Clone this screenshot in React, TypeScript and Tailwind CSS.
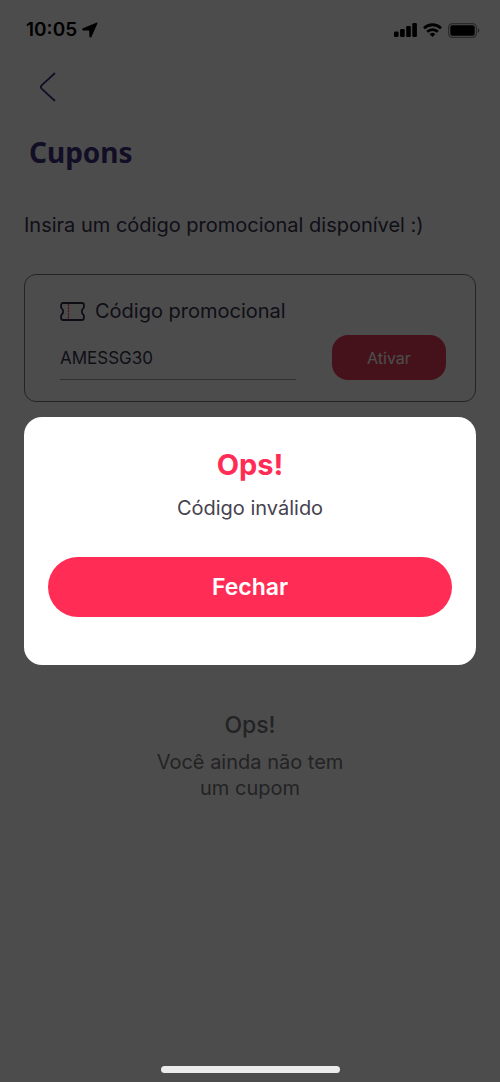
import { useState } from "react";

function StatusBar() {
  return (
    <header className="flex h-[60px] items-center justify-between pr-5 pl-[26px] text-black">
      <div className="flex items-center gap-[5px]">
        <span className="text-[19px] leading-6 font-semibold">10:05</span>
        <svg width="16" height="16" viewBox="0 0 16 16" fill="currentColor" aria-hidden="true">
          <path d="M14.300.7 1 6.300C-.1 6.800.1 8.400 1.300 8.400l5.900.2.200 5.900c.1 1.300 1.600 1.500 2.100.3L15.300 1.700c.3-.8-.2-1.300-1-1z" />
        </svg>
      </div>
      <div className="flex items-center gap-[6px]">
        <svg width="23" height="14" viewBox="0 0 23 14" fill="currentColor" aria-hidden="true">
          <rect x="0" y="8.500" width="4.600" height="5.500" rx="1.200" />
          <rect x="6.100" y="6" width="4.600" height="8" rx="1.200" />
          <rect x="12.200" y="3" width="4.600" height="11" rx="1.200" />
          <rect x="18.300" y="0" width="4.600" height="14" rx="1.200" />
        </svg>
        <svg width="19" height="14" viewBox="0 0 19 14" fill="none" stroke="currentColor" strokeWidth="2.800" aria-hidden="true">
          <path d="M1 5.200a12.200 12.200 0 0 1 17 0" />
          <path d="M4.200 8.800a7.600 7.600 0 0 1 10.600 0" />
          <path d="M9.500 14 6.700 11.200a4 4 0 0 1 5.600 0z" fill="currentColor" stroke="none" />
        </svg>
        <svg width="32" height="15" viewBox="0 0 32 15" aria-hidden="true">
          <rect x=".6" y=".6" width="27.800" height="13.800" rx="4" fill="none" stroke="#000" strokeOpacity=".45" strokeWidth="1.200" />
          <rect x="2.300" y="2.300" width="24.400" height="10.400" rx="2" fill="#000" />
          <path d="M29.800 5.200c2.100.7 2.100 3.900 0 4.600z" fill="#000" fillOpacity=".5" />
        </svg>
      </div>
    </header>
  );
}

function TicketIcon() {
  return (
    <svg width="25" height="19" viewBox="0 0 25 19" fill="none" aria-hidden="true">
      <path
        d="M3 1h19c1.100 0 1.900.8 1.900 1.900v2.300c0 .5-.2.9-.6 1.200-2 1.500-2 4.700 0 6.200.4.300.6.7.6 1.200v2.300c0 1.100-.8 1.900-1.900 1.900H3c-1.100 0-1.900-.8-1.900-1.900v-2.300c0-.5.2-.9.6-1.200 2-1.500 2-4.700 0-6.200-.4-.3-.6-.7-.6-1.200V2.900C1.100 1.800 1.900 1 3 1z"
        stroke="#302c45"
        strokeWidth="1.800"
        strokeLinejoin="round"
      />
      <path d="M8.500 2.200v15" stroke="#f52d3c" strokeWidth="1.300" strokeDasharray="2 1" />
    </svg>
  );
}

export default function App() {
  const [code, setCode] = useState("AMESSG30");
  const [open, setOpen] = useState(true);

  return (
    <div className="min-h-screen bg-white font-['Inter',sans-serif] text-[#38344f]">
      <StatusBar />
      <main className="px-6">
        <button type="button" aria-label="Voltar" className="mt-3 ml-[15px] block text-[#3d2f80]">
          <svg width="17" height="30" viewBox="0 0 17 30" fill="none" stroke="currentColor" strokeWidth="1.800" strokeLinecap="round" aria-hidden="true">
            <path d="M15.500 1.500 2.600 13.400q-1.500 1.600 0 3.200L15.500 28.500" />
          </svg>
        </button>
        <h1 className="mt-8 ml-[5px] font-['Noto_Sans',sans-serif] text-[28px] leading-9 font-bold text-[#3d2f80]">Cupons</h1>
        <p className="mt-[41px] text-xl leading-7">Insira um código promocional disponível :)</p>

        <section className="mt-[35px] rounded-xl border border-[#77777c] pt-[22px] pr-[29px] pb-[21px] pl-[35px]">
          <label htmlFor="code" className="flex items-center gap-[10px] text-xl leading-7">
            <TicketIcon />
            Código promocional
          </label>
          <div className="mt-[10px] flex items-stretch gap-9">
            <input
              id="code"
              value={code}
              onChange={(event) => setCode(event.target.value)}
              className="min-w-0 flex-1 border-b border-[#a6a6aa] bg-transparent pt-[3px] text-[17px] outline-none"
            />
            <button type="button" className="h-[45px] w-[114px] shrink-0 rounded-2xl bg-[#e83f5b] text-base text-white">
              Ativar
            </button>
          </div>
        </section>

        <section className="mx-auto mt-[308px] max-w-[220px] text-center text-[#76767c]">
          <h2 className="text-[23px] leading-[30px] font-medium">Ops!</h2>
          <p className="mt-[9px] text-xl leading-[26px]">Você ainda não tem um cupom</p>
        </section>
      </main>

      {open && (
        <div className="fixed inset-0 flex items-center bg-black/70 px-6">
          <div role="dialog" aria-modal="true" aria-labelledby="dialog-title" className="w-full rounded-[18px] bg-white px-6 pt-[30px] pb-12 text-center">
            <h2 id="dialog-title" className="text-[29px] leading-9 font-bold text-[#ff2d55]">Ops!</h2>
            <p className="mt-[11px] text-xl leading-7 text-[#46424f]">Código inválido</p>
            <button
              type="button"
              onClick={() => setOpen(false)}
              className="mt-[35px] h-[60px] w-full rounded-full bg-[#ff2d55] text-[23px] font-semibold text-white"
            >
              Fechar
            </button>
          </div>
        </div>
      )}
      <div className="fixed inset-x-0 bottom-[9px] mx-auto h-[7px] w-[179px] rounded-full bg-[#ebebeb]" />
    </div>
  );
}
